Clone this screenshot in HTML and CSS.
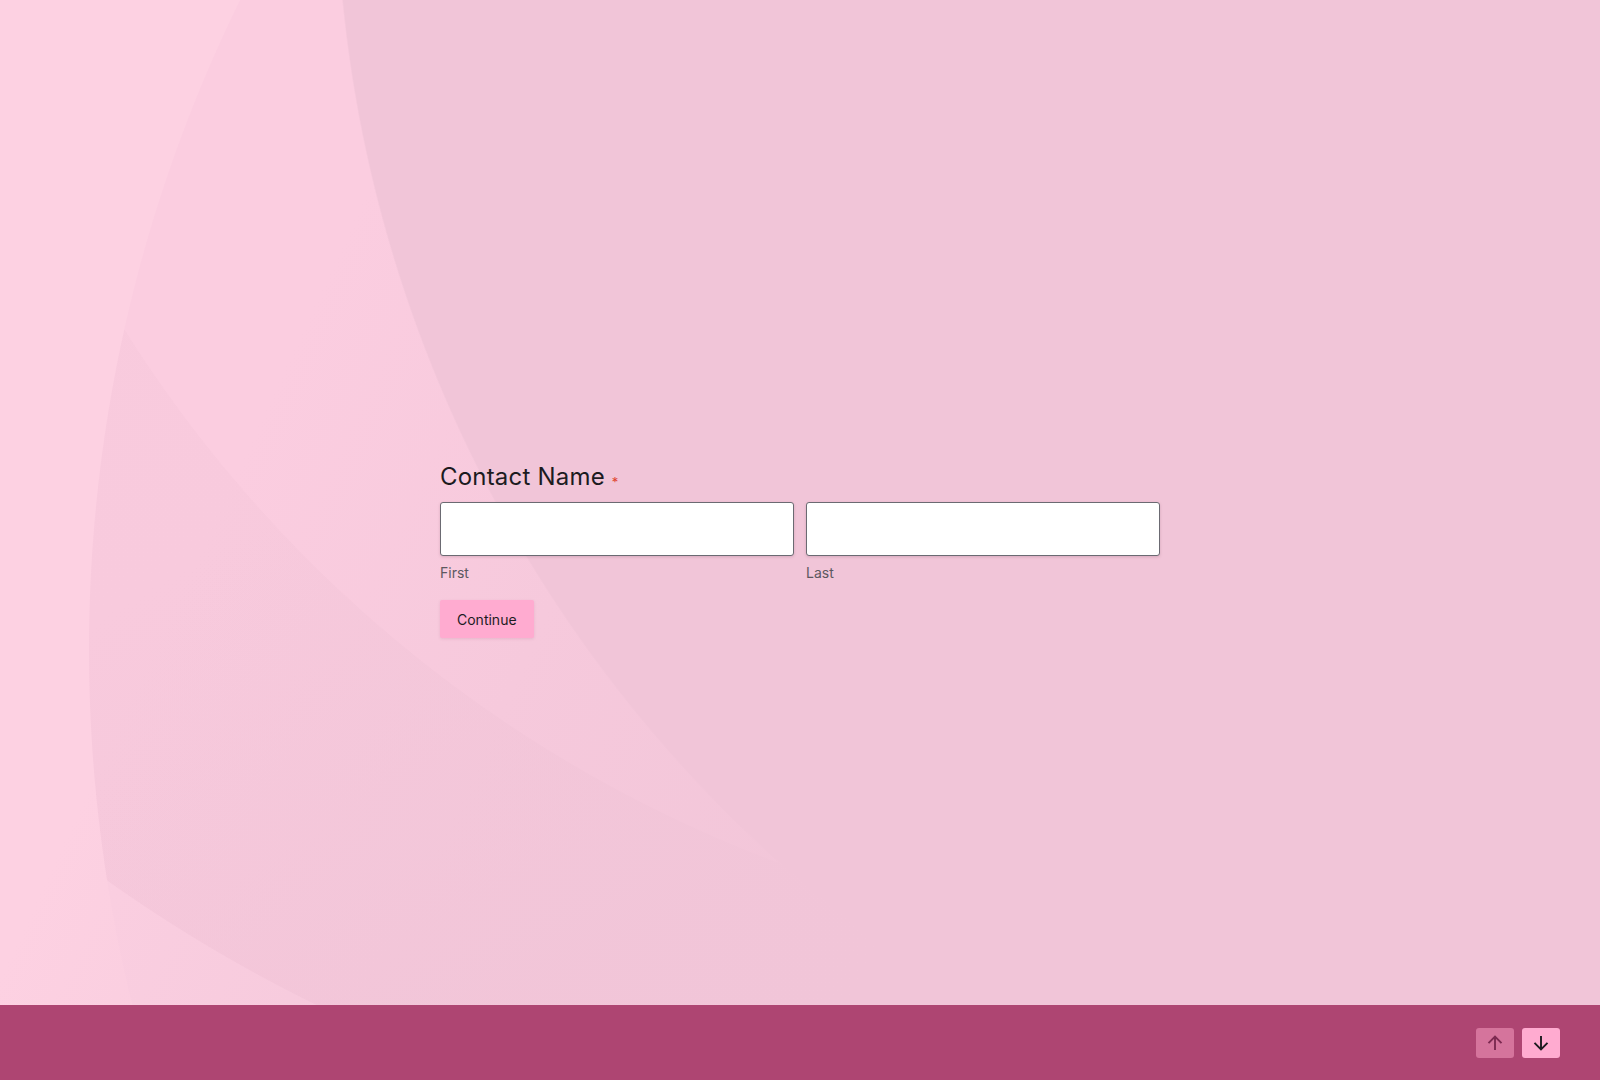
FILE: index.html
```html
<!DOCTYPE html>
<html lang="en">
<head>
<meta charset="utf-8">
<title>Contact Name</title>
<link rel="stylesheet" href="styles.css">
</head>
<body>
<div class="page">
  <main class="stage">
    <form class="card">
      <h1 class="q-title">Contact Name<span class="req">*</span></h1>
      <div class="name-row">
        <div class="field">
          <input class="txt" type="text" aria-label="First">
          <label class="sub">First</label>
        </div>
        <div class="field">
          <input class="txt" type="text" aria-label="Last">
          <label class="sub">Last</label>
        </div>
      </div>
      <button class="continue" type="button">Continue</button>
    </form>
  </main>
  <footer class="bar">
    <div class="nav">
      <button class="nav-btn prev" type="button" aria-label="Previous">
        <svg viewBox="0 0 16 16" width="16" height="16"><path d="M8 15V1.6M1.5 8.2L8 1.6l6.5 6.6" fill="none" stroke="currentColor" stroke-width="1.9"/></svg>
      </button>
      <button class="nav-btn next" type="button" aria-label="Next">
        <svg viewBox="0 0 16 16" width="16" height="16"><path d="M8 1v13.4M1.5 7.8L8 14.4l6.5-6.6" fill="none" stroke="currentColor" stroke-width="1.9"/></svg>
      </button>
    </div>
  </footer>
</div>
</body>
</html>
```

FILE: styles.css
```css
* { box-sizing: border-box; }
html, body { margin: 0; padding: 0; }
body {
  font-family: Inter, "Liberation Sans", Arial, sans-serif;
  color: #1c1b1f;
  overflow: hidden;
}
.page {
  width: 1600px;
  height: 1080px;
  display: flex;
  flex-direction: column;
}
.stage {
  flex: 1;
  padding-top: 462px;
  background:
    linear-gradient(115deg, rgba(241,197,216,0) 22%, rgba(241,197,216,0.55) 42%, rgba(241,197,216,1) 64%),
    radial-gradient(circle 1334px at 1670px -130px, #f1c5d8 1333px, rgba(241,197,216,0) 1334.5px),
    radial-gradient(circle 1474px at 1563px 650px, rgba(253,209,226,0) 1473.5px, #fdd1e2 1474.5px),
    radial-gradient(circle 1502px at 977px -344px, rgba(251,207,225,0) 1501.5px, #fbcfe1 1502.5px),
    radial-gradient(circle 1320px at 1242px -373px, #fbcde0 1319.5px, rgba(251,205,224,0) 1320.5px),
    linear-gradient(150deg, #f9cbde 0%, #f8cadd 35%, #f3c6d9 70%, #f1c5d8 100%);
}
.card {
  width: 720px;
  margin: 0 auto;
}
.q-title {
  margin: 0 0 11px;
  font-size: 24px;
  font-weight: 400;
  line-height: 29px;
  color: #1c1b1f;
  letter-spacing: 0.2px;
}
.req {
  color: #e0442c;
  font-size: 13px;
  line-height: 0;
  margin-left: 7px;
  vertical-align: -2px;
}
.name-row {
  display: flex;
  gap: 12px;
}
.field {
  flex: 1;
  display: flex;
  flex-direction: column;
}
.txt {
  width: 100%;
  height: 54px;
  margin: 0;
  border: 1px solid #6b6a72;
  border-radius: 3px;
  background: #fff;
  box-shadow: 0 1px 3px rgba(90, 40, 60, 0.18);
  font: inherit;
}
.sub {
  margin-top: 7px;
  font-size: 14px;
  line-height: 20px;
  color: #5c5860;
}
.continue {
  margin-top: 17px;
  height: 38px;
  padding: 0 17px;
  border: 0;
  border-radius: 2px;
  background: #ffabd0;
  color: #1c1b1f;
  font-family: Inter, "Liberation Sans", Arial, sans-serif;
  font-size: 14px;
  font-weight: 400;
  box-shadow: 0 1px 3px rgba(120, 40, 80, 0.12);
}
.bar {
  height: 75px;
  flex: none;
  background: #ae4572;
  display: flex;
  align-items: center;
  justify-content: flex-end;
  padding-right: 40px;
}
.nav {
  display: flex;
  gap: 8px;
  margin-top: 1px;
}
.nav-btn {
  width: 38px;
  height: 30px;
  padding: 0;
  border: 0;
  border-radius: 3px;
  display: flex;
  align-items: center;
  justify-content: center;
}
.nav-btn svg { display: block; }
.prev {
  background: #d5749c;
  color: #7c2a51;
}
.next {
  background: #ffabd0;
  color: #1c1b1f;
}
```
